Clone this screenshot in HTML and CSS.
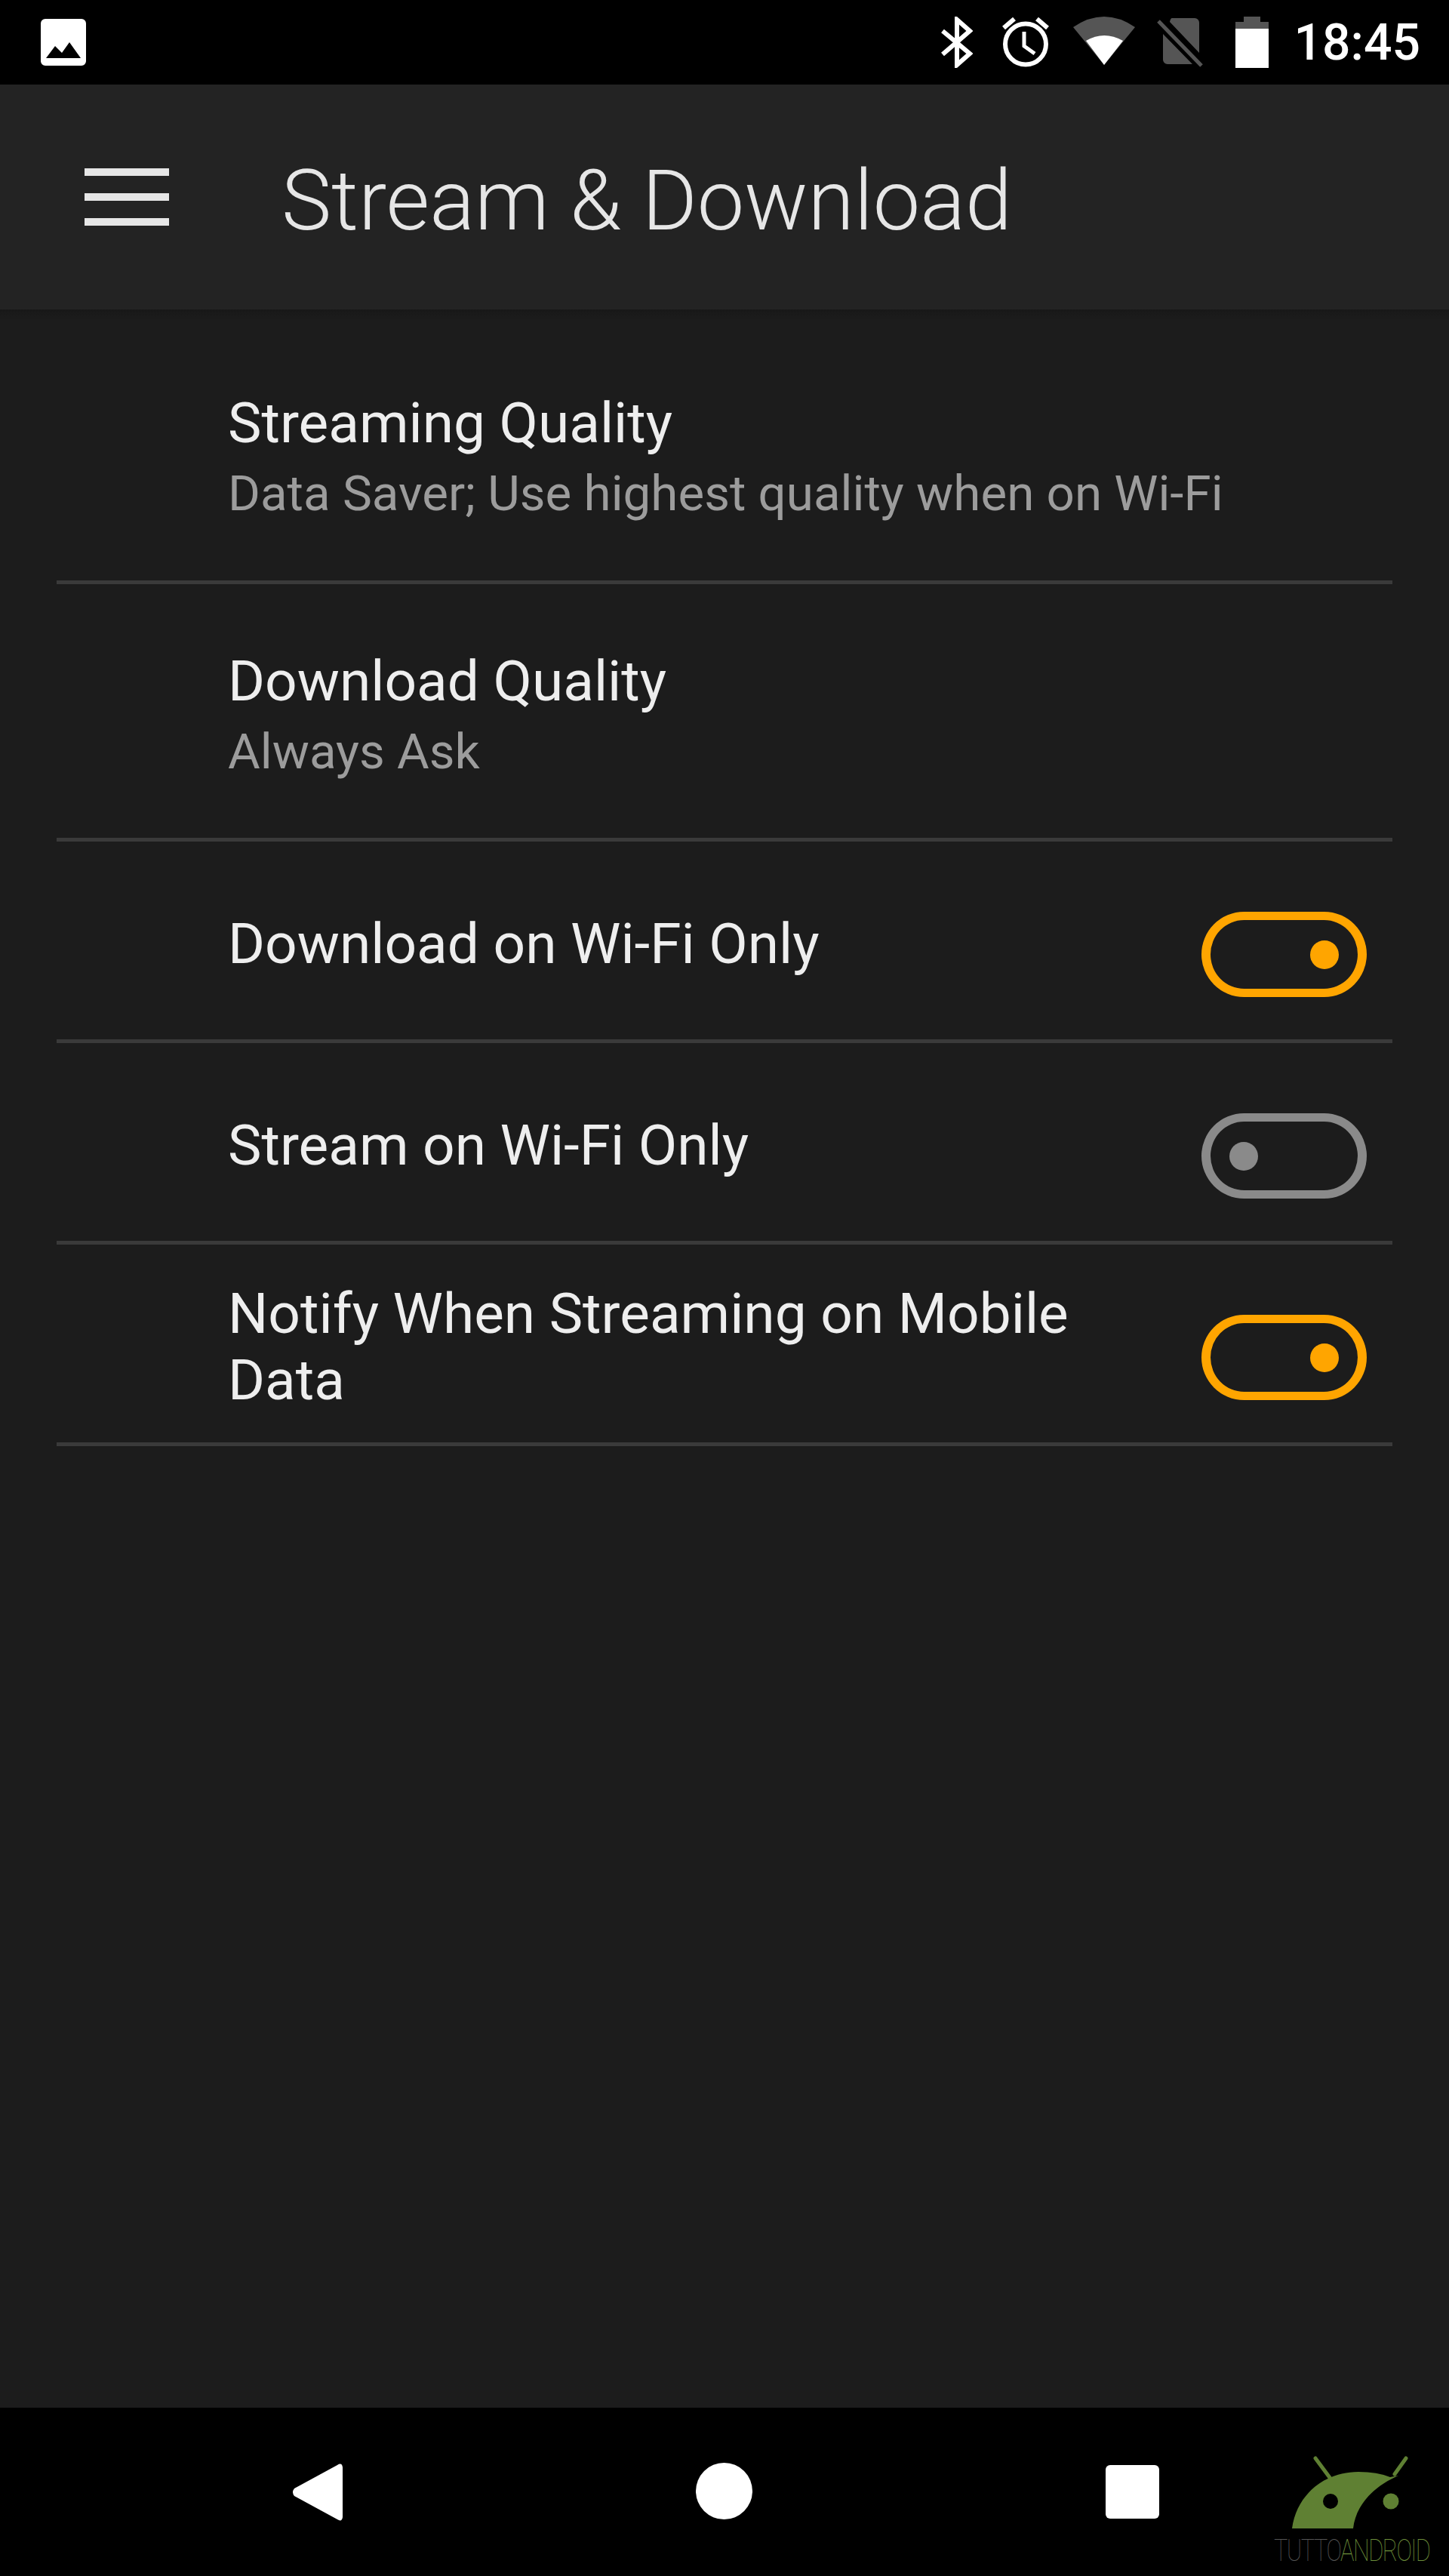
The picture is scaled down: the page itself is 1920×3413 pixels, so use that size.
FILE: index.html
```html
<!DOCTYPE html>
<html lang="en">
<head>
    <meta charset="UTF-8">
    <meta name="viewport" content="width=device-width, initial-scale=1.0">
    <title>Stream &amp; Download</title>
    <link rel="stylesheet" href="styles.css">
</head>
<body>
    <div class="phone">
        <div class="status-bar">
            <svg class="picture-icon" width="60" height="62" viewBox="0 0 60 62">
                <path fill="#fff" fill-rule="evenodd" d="M6 0H54A6 6 0 0 1 60 6V56A6 6 0 0 1 54 62H6A6 6 0 0 1 0 56V6A6 6 0 0 1 6 0ZM7 52H53L38 31 28 45 19 36Z"/>
            </svg>
            <div class="status-right">
                <svg class="status-icon" width="42" height="68" viewBox="0 0 42 68">
                    <path fill="none" stroke="#fff" stroke-width="6" d="M2 19L38 49 21 64V4L38 19 2 50"/>
                </svg>
                <svg class="status-icon alarm" width="64" height="68" viewBox="0 0 64 68">
                    <circle cx="32" cy="36.5" r="27" fill="none" stroke="#fff" stroke-width="6"/>
                    <path fill="none" stroke="#fff" stroke-width="5" d="M30 20V39L44 49"/>
                    <path fill="none" stroke="#fff" stroke-width="6" d="M3 15L17 3M61 15L47 3"/>
                </svg>
                <svg class="status-icon wifi" width="82" height="68" viewBox="0 0 82 68">
                    <path fill="#555" d="M0 14Q41 -14 82 14L41 64Z"/>
                    <path fill="#fff" d="M17 32Q41 18 66 32L41 64Z"/>
                </svg>
                <svg class="status-icon sim" width="62" height="68" viewBox="0 0 62 68">
                    <path fill="#555" d="M20 2H50A6 6 0 0 1 56 8V48L17 7Q18 2 20 2ZM8 23L47 63H14A6 6 0 0 1 8 57Z"/>
                    <path fill="none" stroke="#555" stroke-width="5" d="M2 6L59 65"/>
                </svg>
                <svg class="status-icon battery" width="44" height="68" viewBox="0 0 44 68">
                    <path fill="#555" d="M11 0H33V7H44V16H0V7H11Z"/>
                    <rect y="16" width="44" height="52" fill="#fff"/>
                </svg>
                <span class="clock">18:45</span>
            </div>
        </div>

        <header class="toolbar">
            <div class="menu-icon">
                <span></span>
                <span></span>
                <span></span>
            </div>
            <h1>Stream &amp; Download</h1>
        </header>

        <main class="settings">
            <div class="row row-text row-first">
                <div class="row-label">
                    <div class="row-title">Streaming Quality</div>
                    <div class="row-sub">Data Saver; Use highest quality when on Wi-Fi</div>
                </div>
            </div>
            <div class="row row-text">
                <div class="row-label">
                    <div class="row-title">Download Quality</div>
                    <div class="row-sub">Always Ask</div>
                </div>
            </div>
            <div class="row row-switch">
                <div class="row-label">
                    <div class="row-title">Download on Wi-Fi Only</div>
                </div>
                <div class="switch on"><span class="knob"></span></div>
            </div>
            <div class="row row-switch">
                <div class="row-label">
                    <div class="row-title">Stream on Wi-Fi Only</div>
                </div>
                <div class="switch"><span class="knob"></span></div>
            </div>
            <div class="row row-switch">
                <div class="row-label">
                    <div class="row-title">Notify When Streaming on Mobile Data</div>
                </div>
                <div class="switch on"><span class="knob"></span></div>
            </div>
        </main>

        <nav class="nav-bar">
            <svg class="nav-back" width="68" height="76" viewBox="0 0 68 76">
                <path fill="#fff" d="M67 5V71Q66 78 60 74L3 43Q-1 38 3 33L60 2Q66 -2 67 5Z"/>
            </svg>
            <div class="nav-home"></div>
            <div class="nav-recent"></div>
            <div class="logo">
                <svg width="180" height="100" viewBox="0 0 180 100">
                    <g transform="translate(-48 -30)">
                        <path fill="none" stroke="#5f8033" stroke-width="5" stroke-linecap="round" d="M103 37L123 64M223 37L208 58"/>
                        <path fill="#5f8033" d="M72 130C78 85 115 55 160 55Q185 55 202 62L213 60C185 72 157 95 153 130Z"/>
                        <circle cx="123" cy="94" r="10" fill="#000"/>
                        <circle cx="203" cy="94" r="10.5" fill="#5f8033"/>
                    </g>
                </svg>
                <div class="logo-text"><span class="logo-tutto">TUTTO</span><span class="logo-android">ANDROID</span></div>
            </div>
        </nav>
    </div>
</body>
</html>
```

FILE: styles.css
```css
body {
    margin: 0;
    background-color: #1c1c1c;
    font-family: Roboto, "Liberation Sans", sans-serif;
}
.phone {
    width: 1920px;
    height: 3413px;
    display: flex;
    flex-direction: column;
    overflow: hidden;
}

/* status bar */
.status-bar {
    height: 112px;
    background-color: #000;
    display: flex;
    align-items: center;
    justify-content: space-between;
    padding: 0 38px 0 54px;
    flex-shrink: 0;
}
.status-right {
    display: flex;
    align-items: center;
}
.status-icon {
    display: block;
    margin-right: 38px;
}
.status-icon.alarm {
    margin-right: 31px;
}
.status-icon.wifi {
    margin-right: 29px;
}
.status-icon.sim {
    margin-right: 42px;
}
.status-icon.battery {
    margin-right: 34px;
}
.clock {
    color: #fff;
    font-size: 66px;
    font-weight: 500;
}

/* toolbar */
.toolbar {
    height: 298px;
    background-color: #232323;
    display: flex;
    align-items: center;
    flex-shrink: 0;
}
.menu-icon {
    width: 112px;
    margin-left: 112px;
    display: flex;
    flex-direction: column;
    gap: 23px;
}
.menu-icon span {
    display: block;
    height: 10px;
    background-color: #e6e6e6;
}
.toolbar h1 {
    margin: 10px 0 0 149px;
    color: #e6e6e6;
    font-size: 111.5px;
    font-weight: 300;
}

/* settings list */
.settings {
    flex: 1;
    padding: 0 75px;
    background: linear-gradient(#181818, #1c1c1c 14px);
}
.row {
    display: flex;
    align-items: center;
    justify-content: space-between;
    border-bottom: 5px solid #3a3a3a;
    box-sizing: border-box;
    padding-left: 227px;
    padding-right: 34px;
}
.row-text {
    height: 341px;
    padding-top: 14px;
}
.row-first {
    height: 364px;
    padding-top: 36px;
}
.row-switch {
    height: 267px;
    padding-top: 10px;
}
.row-switch .row-label {
    max-width: 1200px;
}
.row-title {
    color: #eee;
    font-size: 74.8px;
    line-height: 88px;
}
.row-sub {
    color: #9c9c9c;
    font-size: 65.5px;
    line-height: 88px;
    margin-top: 5px;
}

/* toggles */
.switch {
    width: 219px;
    height: 113px;
    box-sizing: border-box;
    border-style: solid;
    border-width: 11px 12px;
    border-color: #8a8a8a;
    border-radius: 57px;
    display: flex;
    align-items: center;
    padding: 0 25px;
    margin-top: 27px;
    flex-shrink: 0;
}
.switch .knob {
    width: 38px;
    height: 38px;
    border-radius: 50%;
    background-color: #8a8a8a;
}
.switch.on {
    border-color: #ffa500;
    justify-content: flex-end;
}
.switch.on .knob {
    background-color: #ffa500;
}

/* navigation bar */
.nav-bar {
    height: 223px;
    background-color: #000;
    position: relative;
    flex-shrink: 0;
}
.nav-back {
    position: absolute;
    left: 387px;
    top: 74px;
}
.nav-home {
    position: absolute;
    left: 922px;
    top: 73px;
    width: 75px;
    height: 75px;
    border-radius: 50%;
    background-color: #fff;
}
.nav-recent {
    position: absolute;
    left: 1465px;
    top: 76px;
    width: 71px;
    height: 71px;
    border-radius: 6px;
    background-color: #fff;
}
.logo {
    position: absolute;
    left: 1688px;
    top: 60px;
    width: 207px;
}
.logo svg {
    display: block;
}
.logo-text {
    font-size: 40px;
    font-weight: 100;
    line-height: 40px;
    margin-top: 10px;
    letter-spacing: -2px;
    white-space: nowrap;
    transform: scaleX(0.77);
    transform-origin: left center;
}
.logo-tutto {
    color: #555;
}
.logo-android {
    color: #6d8f3a;
}
```
